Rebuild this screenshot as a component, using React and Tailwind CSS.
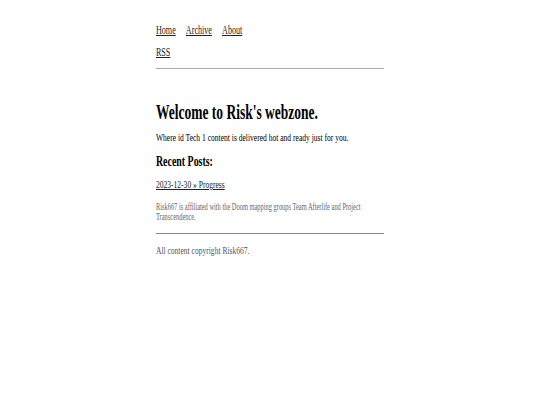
export default function App() {
    return (
        <div className="w-full min-h-[405px] overflow-hidden bg-white">
            {/* page is laid out at 800px and squeezed to the 540px window */}
            <div className="w-[800px] origin-top-left scale-x-[0.675] font-['Liberation_Serif',serif] text-black">
                <div className="mx-auto w-[338px] pt-[19px]">
                    <nav className="text-[12px] leading-[22px]">
                        <div className="flex gap-[15px]">
                            <a href="#" className="text-[#222] underline">Home</a>
                            <a href="#" className="text-[#222] underline">Archive</a>
                            <a href="#" className="text-[#222] underline">About</a>
                        </div>
                        <div>
                            <a href="#" className="text-[#222] underline">RSS</a>
                        </div>
                    </nav>
                    <div className="mt-[5px] h-px bg-[#aaa]" />

                    <h1 className="mt-[31px] text-[20px] leading-[24px] font-bold">Welcome to Risk's webzone.</h1>
                    <p className="mt-[5px] text-[11.2px] leading-[16px]">
                        Where id Tech 1 content is delivered hot and ready just for you.
                    </p>

                    <h2 className="mt-[7px] text-[14.7px] leading-[18px] font-bold">Recent Posts:</h2>
                    <ul className="mt-[6px] text-[11.2px] leading-[16px]">
                        <li>
                            <a href="#" className="text-[#222] underline">2023-12-30 » Progress</a>
                        </li>
                    </ul>

                    <p className="mt-[10px] text-[9.5px] leading-[10px] text-[#666]">
                        Risk667 is affiliated with the Doom mapping groups Team Afterlife and Project Transcendence.
                    </p>

                    <div className="mt-[11px] h-px bg-[#888]" />
                    <footer className="mt-[8px] text-[11.2px] leading-[16px] text-[#555]">
                        All content copyright Risk667.
                    </footer>
                </div>
            </div>
        </div>
    )
}
